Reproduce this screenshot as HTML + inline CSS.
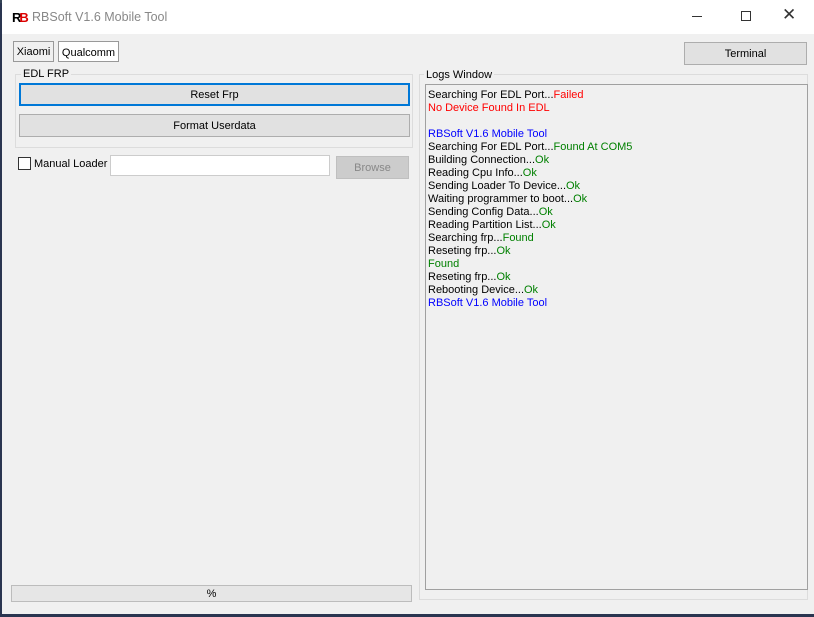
<!DOCTYPE html><html><head><style>
*{margin:0;padding:0;box-sizing:border-box}
body{width:814px;height:617px;overflow:hidden;background:#2a3550;font-family:"Liberation Sans",sans-serif;font-size:11px;color:#000;position:relative}
.win{position:absolute;left:2px;top:0;width:812px;height:614px;background:#f0f0f0}
.tb{position:absolute;left:0;top:0;width:812px;height:34px;background:#fff}
.abs{position:absolute}
.btn{position:absolute;background:#e1e1e1;border:1px solid #adadad;text-align:center}
.log div{height:13px;line-height:13px;white-space:nowrap}
.g{color:#008000}.r{color:#f00}.b{color:#00f}
</style></head><body>
<div class="abs" style="left:0;top:0;width:814px;height:3px;background:#345"></div>
<div class="win">
<div class="tb">
 <div class="abs" style="left:10px;top:10px;font-weight:bold;font-size:13px;color:#000;letter-spacing:-2px">R<span style="color:#d00">B</span></div>
 <div class="abs" style="left:30px;top:10px;font-size:12.5px;color:#888">RBSoft V1.6 Mobile Tool</div>
 <div class="abs" style="left:690px;top:16px;width:10px;height:1px;background:#333"></div>
 <div class="abs" style="left:739px;top:11px;width:10px;height:10px;border:1px solid #333"></div>
 <div class="abs" style="left:780px;top:5px;font-size:17px;color:#333">✕</div>
</div>
<div class="btn" style="left:11px;top:41px;width:41px;height:21px;line-height:21px;border-color:#999;background:#f0f0f0">Xiaomi</div>
<div class="btn" style="left:56px;top:41px;width:61px;height:21px;line-height:22px;border-color:#999;background:#fff">Qualcomm</div>
<div class="btn" style="left:682px;top:42px;width:123px;height:23px;line-height:23px">Terminal</div>
<div class="abs" style="left:13px;top:74px;width:398px;height:74px;border:1px solid #dcdcdc"></div>
<div class="abs" style="left:19px;top:68px;background:#f0f0f0;padding:0 2px">EDL FRP</div>
<div class="btn" style="left:17px;top:83px;width:391px;height:23px;line-height:21px;border:2px solid #0078d7">Reset Frp</div>
<div class="btn" style="left:17px;top:114px;width:391px;height:23px;line-height:23px">Format Userdata</div>
<div class="abs" style="left:16px;top:157px;width:13px;height:13px;border:1px solid #333;background:#fff"></div>
<div class="abs" style="left:32px;top:158px">Manual Loader</div>
<div class="abs" style="left:108px;top:155px;width:220px;height:21px;border:1px solid #ccc;background:#fff"></div>
<div class="btn" style="left:334px;top:156px;width:73px;height:23px;line-height:23px;background:#ccc;border-color:#bfbfbf;color:#888">Browse</div>
<div class="abs" style="left:417px;top:74px;width:389px;height:526px;border:1px solid #dcdcdc"></div>
<div class="abs" style="left:422px;top:69px;background:#f0f0f0;padding:0 2px">Logs Window</div>
<div class="abs log" style="left:423px;top:84px;width:383px;height:506px;border:1px solid #a0a0a0;padding:4px 0 0 2px">
<div>Searching For EDL Port...<span class="r">Failed</span></div>
<div class="r">No Device Found In EDL</div>
<div></div>
<div class="b">RBSoft V1.6 Mobile Tool</div>
<div>Searching For EDL Port...<span class="g">Found At COM5</span></div>
<div>Building Connection...<span class="g">Ok</span></div>
<div>Reading Cpu Info...<span class="g">Ok</span></div>
<div>Sending Loader To Device...<span class="g">Ok</span></div>
<div>Waiting programmer to boot...<span class="g">Ok</span></div>
<div>Sending Config Data...<span class="g">Ok</span></div>
<div>Reading Partition List...<span class="g">Ok</span></div>
<div>Searching frp...<span class="g">Found</span></div>
<div>Reseting frp...<span class="g">Ok</span></div>
<div class="g">Found</div>
<div>Reseting frp...<span class="g">Ok</span></div>
<div>Rebooting Device...<span class="g">Ok</span></div>
<div class="b">RBSoft V1.6 Mobile Tool</div>
</div>
<div class="btn" style="left:9px;top:585px;width:401px;height:17px;line-height:17px;border-color:#bcbcbc;background:#e6e6e6">%</div>
</div>
</body></html>
